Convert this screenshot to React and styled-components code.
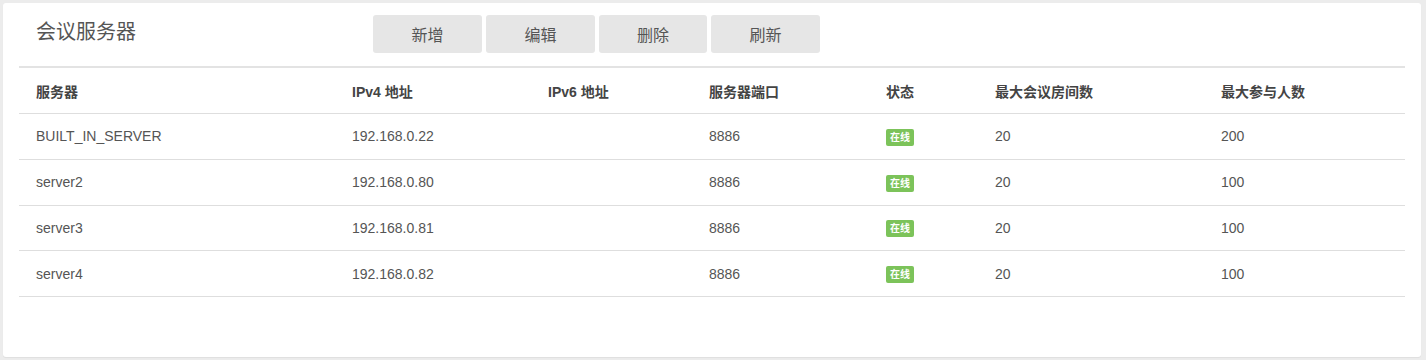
import React from "react";
import styled, { createGlobalStyle } from "styled-components";

const GlobalStyle = createGlobalStyle`
  html, body {
    margin: 0;
    padding: 0;
    background: #ececec;
    font-family: "Liberation Sans", Arial, "Noto Sans CJK SC", sans-serif;
  }
`;

export const Page = styled.div`
  padding: 3px 5px 3px 3px;
  height: 360px;
  box-sizing: border-box;
`;

export const Card = styled.div`
  background: #fff;
  border-radius: 3px;
  height: 100%;
  padding: 0 16px 0 16px;
  box-sizing: border-box;
  box-shadow: 0 1px 1px rgba(0, 0, 0, 0.06);
`;

export const Header = styled.div`
  display: flex;
  align-items: center;
  height: 62px;
  padding-left: 17px;
  padding-bottom: 1px;
`;

export const Title = styled.h3`
  margin: 0;
  width: 337px;
  font-size: 20px;
  font-weight: normal;
  color: #555;
  line-height: 1;
  margin-top: -5px;
`;

export const Toolbar = styled.div`
  display: flex;
  gap: 4px;
`;

export const ToolButton = styled.button`
  width: ${(p) => p.w}px;
  height: 38px;
  border: none;
  border-radius: 3px;
  background: #e6e6e6;
  color: #555;
  font-size: 16px;
  font-family: inherit;
  cursor: pointer;
  padding: 0;
`;

export const Table = styled.table`
  width: 100%;
  border-collapse: collapse;
  border-top: 2px solid #e3e3e3;
  table-layout: fixed;
`;

export const Th = styled.th`
  text-align: left;
  font-size: 14px;
  font-weight: bold;
  color: #444;
  height: 45px;
  padding: 0 0 0 17px;
  border-bottom: 1px solid #dedede;
`;

export const Td = styled.td`
  font-size: 14px;
  color: #555;
  height: 44.75px;
  padding: 0 0 0 17px;
  border-bottom: 1px solid #dedede;
`;

export const Badge = styled.span`
  display: inline-block;
  background: #7cc35a;
  color: #fff;
  font-size: 10px;
  font-weight: bold;
  line-height: 17px;
  padding: 0 4px;
  border-radius: 2px;
  vertical-align: middle;
  margin-top: 2px;
`;

const columns = [
  { label: "服务器", width: 316 },
  { label: "IPv4 地址", width: 196 },
  { label: "IPv6 地址", width: 161 },
  { label: "服务器端口", width: 177 },
  { label: "状态", width: 109 },
  { label: "最大会议房间数", width: 226 },
  { label: "最大参与人数", width: 201 },
];

const servers = [
  { name: "BUILT_IN_SERVER", ipv4: "192.168.0.22", ipv6: "", port: "8886", rooms: 20, users: 200 },
  { name: "server2", ipv4: "192.168.0.80", ipv6: "", port: "8886", rooms: 20, users: 100 },
  { name: "server3", ipv4: "192.168.0.81", ipv6: "", port: "8886", rooms: 20, users: 100 },
  { name: "server4", ipv4: "192.168.0.82", ipv6: "", port: "8886", rooms: 20, users: 100 },
];

function App() {
  return (
    <Page>
      <GlobalStyle />
      <Card>
        <Header>
          <Title>会议服务器</Title>
          <Toolbar>
            <ToolButton w={109}>新增</ToolButton>
            <ToolButton w={109}>编辑</ToolButton>
            <ToolButton w={108}>删除</ToolButton>
            <ToolButton w={109}>刷新</ToolButton>
          </Toolbar>
        </Header>
        <Table>
          <colgroup>
            {columns.map((c) => (
              <col key={c.label} style={{ width: c.width }} />
            ))}
          </colgroup>
          <thead>
            <tr>
              {columns.map((c) => (
                <Th key={c.label}>{c.label}</Th>
              ))}
            </tr>
          </thead>
          <tbody>
            {servers.map((s) => (
              <tr key={s.name}>
                <Td>{s.name}</Td>
                <Td>{s.ipv4}</Td>
                <Td>{s.ipv6}</Td>
                <Td>{s.port}</Td>
                <Td>
                  <Badge>在线</Badge>
                </Td>
                <Td>{s.rooms}</Td>
                <Td>{s.users}</Td>
              </tr>
            ))}
          </tbody>
        </Table>
      </Card>
    </Page>
  );
}

export default App;
